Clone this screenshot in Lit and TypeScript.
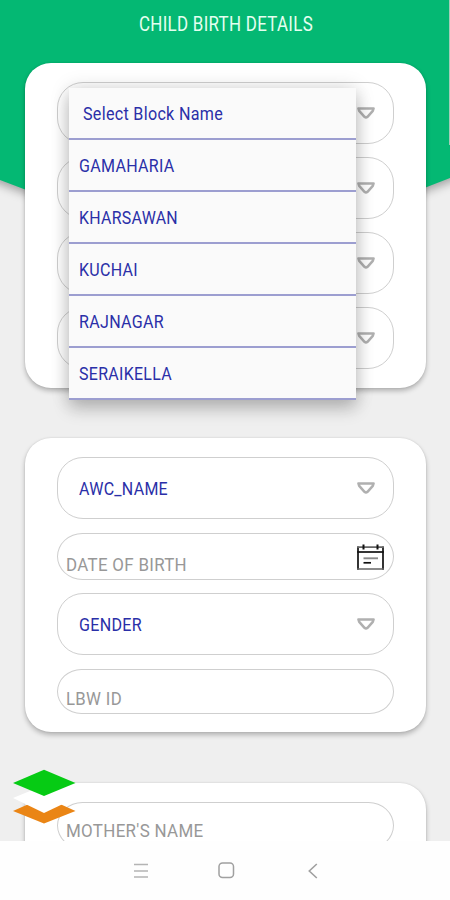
import { LitElement, html, svg, css } from "lit";
import { customElement, property } from "lit/decorators.js";

/** Single line of condensed text, fitted to a given advance width. */
@customElement("fit-text")
class FitText extends LitElement {
  @property() text = "";
  @property({ type: Number }) width = 100;
  @property({ type: Number }) size = 18.8;

  static styles = css`
    :host { display: block; flex: none; height: 24px; }
    svg { display: block; overflow: visible; }
    text { font-family: Roboto, "Liberation Sans", sans-serif; letter-spacing: 0.35px; fill: currentColor; }
  `;

  render() {
    return html`<svg width=${this.width} height="24">
      ${svg`<text x="0" y="19" font-size=${this.size} textLength=${this.width} lengthAdjust="spacingAndGlyphs">${this.text}</text>`}
    </svg>`;
  }
}

/** Pill-shaped spinner with an outlined arrow. */
@customElement("select-field")
class SelectField extends LitElement {
  @property() label = "";
  @property({ type: Number }) width = 0;

  static styles = css`
    :host {
      display: flex; align-items: center; justify-content: space-between; flex: none;
      box-sizing: border-box; height: 62px; padding: 0 17px 0 21px;
      border: 1px solid #cfcfcf; border-radius: 26px; color: #2a2fa8;
    }
    svg { display: block; margin-left: auto; }
  `;

  render() {
    return html`
      ${this.label ? html`<fit-text text=${this.label} width=${this.width}></fit-text>` : ""}
      <svg width="20" height="14" viewBox="0 0 20 14">
        <path d="M2.4 2.4H17.600L16.800 4.800L11.500 10.800Q10 12.100 8.500 10.800L3.200 4.800Z" fill="none" stroke="#b0b0b0" stroke-width="2.5" stroke-linejoin="round" />
      </svg>
    `;
  }
}

/** Text input outline with its hint resting near the bottom edge. */
@customElement("input-field")
class InputField extends LitElement {
  @property() label = "";
  @property({ type: Number }) width = 0;

  static styles = css`
    :host {
      display: flex; align-items: flex-end; justify-content: space-between; flex: none;
      box-sizing: border-box; height: 47px; padding: 0 8px 3px 8px;
      border: 1px solid #cfcfcf; border-radius: 26px / 24px; color: #989898;
    }
  `;

  render() {
    return html`<fit-text text=${this.label} width=${this.width}></fit-text><slot></slot>`;
  }
}

@customElement("app-root")
class AppRoot extends LitElement {
  static styles = css`
    :host {
      display: flex; flex-direction: column; position: relative;
      width: 450px; height: 900px; overflow: hidden; background: #efefef;
    }
    .backdrop { position: absolute; left: 0; top: 0; }
    .curve { filter: drop-shadow(0 4px 5px rgba(0, 0, 0, 0.32)); }
    .content {
      position: relative; flex: 1; min-height: 0; overflow: hidden;
      display: flex; flex-direction: column; padding: 0 24px 0 25px;
    }
    .title { display: flex; justify-content: center; flex: none; height: 63px; padding-top: 12px; box-sizing: border-box; color: #e4fff0; }
    .title fit-text { -webkit-text-stroke: 0.5px #e4fff0; }
    .card {
      flex: none; box-sizing: border-box; display: flex; flex-direction: column;
      padding: 19px 32px; border-radius: 26px; background: #fff;
      box-shadow: 0 3px 5px rgba(0, 0, 0, 0.25), 0 0 2px rgba(0, 0, 0, 0.12);
    }
    .block { height: 325px; gap: 13px; }
    .birth { height: 294px; margin-top: 50px; }
    .mother { height: 200px; margin-top: 51px; }
    .birth .date { margin-top: 14px; }
    .birth .gender { margin-top: 13px; }
    .birth .lbw { margin-top: 14px; height: 45px; padding-bottom: 3px; }
    .mother input-field { padding-bottom: 6px; }
    .calendar { display: block; align-self: center; margin-top: 4px; }
    .menu {
      position: absolute; left: 69px; top: 88px; width: 287px; background: #fafafa;
      box-shadow: 0 9px 16px rgba(0, 0, 0, 0.2), 0 0 18px rgba(0, 0, 0, 0.15);
    }
    .option {
      display: flex; align-items: center; box-sizing: border-box; height: 52px;
      padding-left: 10px; border-bottom: 2px solid #9c9ed0; color: #2a2fa8;
    }
    .option.head { padding-left: 14px; }
    .logo { position: absolute; left: 13px; top: 769px; }
    .nav {
      position: relative; flex: none; height: 59px; display: grid;
      grid-template-columns: 133px 16px 69px 17px 73px 10px; align-items: center; background: #fefefe;
    }
    .recents { grid-column: 2; }
    .home { grid-column: 4; }
    .back { grid-column: 6; }
  `;

  private options = [
    { name: "Select Block Name", width: 140, head: true },
    { name: "GAMAHARIA", width: 95.5 },
    { name: "KHARSAWAN", width: 99 },
    { name: "KUCHAI", width: 59 },
    { name: "RAJNAGAR", width: 85 },
    { name: "SERAIKELLA", width: 93 },
  ];

  render() {
    return html`
      <svg class="backdrop" width="450" height="260" viewBox="0 0 450 260">
        <path class="curve" d="M-20 -10H470V168L450 178Q225 271 0 180L-20 171Z" fill="#04b873" />
        <path d="M449.5 0V145" stroke="#a3cdb9" />
      </svg>
      <div class="content">
        <div class="title"><fit-text text="CHILD BIRTH DETAILS" width="174" size="19.8"></fit-text></div>
        <section class="card block">
          <select-field></select-field>
          <select-field></select-field>
          <select-field></select-field>
          <select-field></select-field>
        </section>
        <section class="card birth">
          <select-field label="AWC_NAME" width="89"></select-field>
          <input-field class="date" label="DATE OF BIRTH" width="121">
            <svg class="calendar" width="29" height="27" viewBox="0 0 29 27">
              <g fill="none" stroke="#111" stroke-width="1.7">
                <path d="M2 2.5V25.7M27 2.5V25.7" />
                <path d="M1.2 8H27.8" />
                <path d="M1.2 3.2H27.8M1.2 25H27.8" stroke="#666" />
                <path d="M7.5 .5V5.5M21.5 .5V5.5" stroke-width="2" />
                <path d="M7.5 14.3H22" stroke="#8a8a8a" stroke-width="1.9" />
                <path d="M7.5 18.8H15" />
              </g>
            </svg>
          </input-field>
          <select-field class="gender" label="GENDER" width="63"></select-field>
          <input-field class="lbw" label="LBW ID" width="56"></input-field>
        </section>
        <section class="card mother">
          <input-field label="MOTHER'S NAME" width="137.5"></input-field>
        </section>
        <div class="menu">
          ${this.options.map(
            (o) => html`<div class="option ${o.head ? "head" : ""}"><fit-text text=${o.name} width=${o.width}></fit-text></div>`
          )}
        </div>
      </div>
      <svg class="logo" width="63" height="56" viewBox="0 0 63 56">
        <path d="M0 42L31.5 28L62.500 42L31 54.500Z" fill="#ea8515" />
        <path d="M0 29L31.500 16L62.500 29L31 44Z" fill="#fff" />
        <path d="M0 14L31 .8L62.500 14L31 27Z" fill="#06cb14" />
      </svg>
      <nav class="nav">
        <svg class="recents" width="16" height="16"><path d="M1 1.500H15M1 8H15M1 14H15" stroke="#b4b4b4" stroke-width="1.6" /></svg>
        <svg class="home" width="17" height="17"><rect x="1" y="1" width="14.500" height="14.500" rx="3.500" fill="none" stroke="#a0a0a0" stroke-width="1.5" /></svg>
        <svg class="back" width="10" height="16"><path d="M8.800 1L1.300 8L8.800 15" fill="none" stroke="#a0a0a0" stroke-width="1.6" /></svg>
      </nav>
    `;
  }
}
